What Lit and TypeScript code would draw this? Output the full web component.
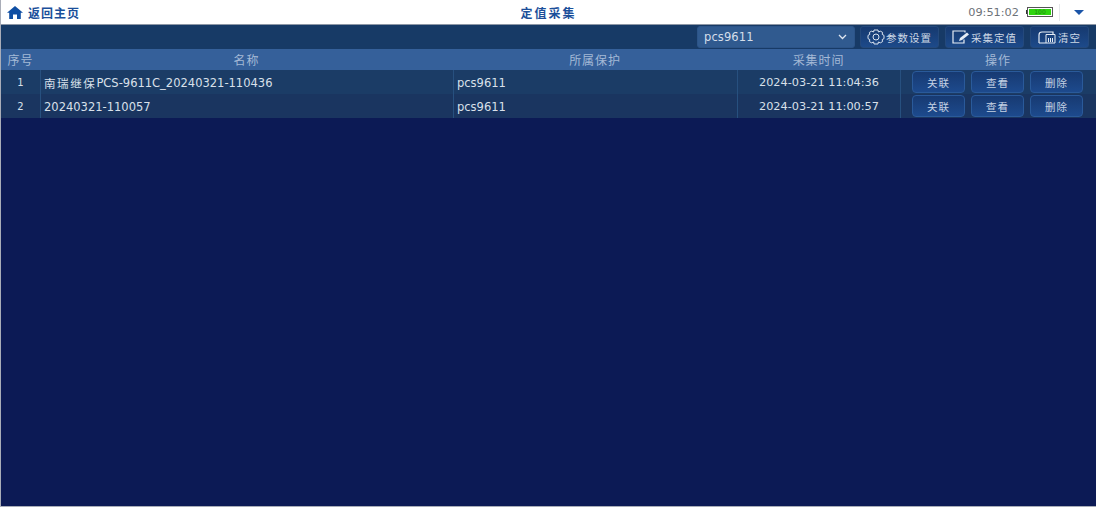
import { LitElement, html, css } from "lit";
import { customElement } from "lit/decorators.js";

const rows = [
  { n: 1, cjk: "南瑞继保", name: "PCS-9611C_20240321-110436", prot: "pcs9611", time: "2024-03-21 11:04:36" },
  { n: 2, cjk: "", name: "20240321-110057", prot: "pcs9611", time: "2024-03-21 11:00:57" },
];

@customElement("app-root")
export class AppRoot extends LitElement {
  static styles = css`
    :host {
      display: block;
      width: 1096px;
      height: 507px;
      box-sizing: border-box;
      overflow: hidden;
      font-family: "DejaVu Sans", "Noto Sans CJK SC", sans-serif;
    }
    .frame {
      height: 507px;
      box-sizing: border-box;
      border: 1px solid #a9adb8;
      border-top: 0;
      border-right: 0;
      background: #0c1a55;
      display: flex;
      flex-direction: column;
    }
    .top {
      height: 24px;
      flex: none;
      background: #fff;
      border-bottom: 1px solid #8d97a6;
      display: grid;
      grid-template-columns: 1fr auto 1fr;
      align-items: center;
    }
    .home {
      display: flex;
      align-items: center;
      gap: 5px;
      padding-left: 6px;
      color: #1b4f9a;
      font-size: 12px;
      font-weight: 700;
      letter-spacing: 1px;
    }
    .title {
      color: #1b4f9a;
      font-size: 12px;
      font-weight: 700;
      letter-spacing: 2px;
    }
    .status {
      display: flex;
      align-items: center;
      justify-content: flex-end;
      color: #6d7278;
      font-size: 11.3px;
    }
    .batt { margin-left: 7px; }
    .sep {
      width: 1px;
      height: 17px;
      margin: 0 14px 0 6px;
      background: #e6e8ea;
    }
    .tri {
      width: 0;
      height: 0;
      margin-right: 12px;
      border-left: 5px solid transparent;
      border-right: 5px solid transparent;
      border-top: 5px solid #1b55a8;
    }
    .tools {
      height: 24px;
      flex: none;
      background: #173a66;
      display: flex;
      align-items: center;
      justify-content: flex-end;
      gap: 6px;
      padding-right: 7px;
    }
    .select {
      width: 158px;
      height: 22px;
      box-sizing: border-box;
      margin-right: -1px;
      padding: 0 7px 0 6px;
      border: 1px solid #2c5488;
      border-radius: 3px;
      background: #305a8f;
      color: #d5deea;
      font-size: 11.5px;
      letter-spacing: 0.1px;
      display: flex;
      align-items: center;
      justify-content: space-between;
    }
    .tool {
      height: 22px;
      box-sizing: border-box;
      border: 1px solid #24497c;
      border-radius: 3px;
      background: linear-gradient(#16396f, #1d4a8a);
      color: #cdd8e6;
      font-size: 10.5px;
      display: flex;
      align-items: center;
      justify-content: center;
      gap: 1px;
      letter-spacing: 1px;
    }
    .t1 { width: 79px; }
    .t2 { width: 79px; }
    .t3 { width: 59px; }
    .grid {
      display: grid;
      grid-template-columns: 39px 413px 284px 163px 1fr;
    }
    .head {
      height: 21px;
      background: #35609a;
      color: #a4b9d6;
      font-size: 12px;
      align-items: center;
      text-align: center;
      letter-spacing: 0.9px;
    }
    .row {
      height: 24px;
      color: #d9e0ea;
      font-size: 11.5px;
      align-items: stretch;
    }
    .row.a { background: #1b3c66; }
    .row.b { background: #1a3560; }
    .cell {
      display: flex;
      align-items: center;
      padding: 1px 3px 0;
      border-left: 1px solid #27507f;
      white-space: nowrap;
    }
    .cell:first-child { border-left: 0; }
    .c { justify-content: center; padding: 1px 0 0; }
    .num { font-size: 10px; }
    .time { font-size: 11.3px; }
    .cjk { letter-spacing: 1.6px; }
    .ops { gap: 6px; padding: 0 0 0 11px; }
    .op {
      width: 53px;
      height: 22px;
      box-sizing: border-box;
      border: 1px solid #2a5a9a;
      border-radius: 4px;
      background: linear-gradient(#173a72, #1d4a8d);
      color: #c5d2e4;
      font-size: 10.5px;
      letter-spacing: 1px;
      display: flex;
      align-items: center;
      justify-content: center;
    }
  `;

  render() {
    return html`
      <div class="frame">
        <div class="top">
          <div class="home">
            <svg width="16" height="13" viewBox="0 0 16 13">
              <path d="M8 0 L16 6.8 H13.8 V13 H10 V8.5 H6 V13 H2.2 V6.8 H0 Z" fill="#0f4ea3" />
            </svg>
            <span>返回主页</span>
          </div>
          <div class="title">定值采集</div>
          <div class="status">
            <span>09:51:02</span>
            <svg class="batt" width="27" height="10" viewBox="0 0 27 10">
              <rect x="0" y="3" width="1.5" height="4" fill="#333" />
              <rect x="1.5" y="0.5" width="25" height="9" fill="#fff" stroke="#555" />
              <rect x="3" y="2" width="22" height="6" fill="#2fd40f" />
              <text x="14" y="7.2" font-size="6" text-anchor="middle" fill="#1d8a10">100</text>
            </svg>
            <div class="sep"></div>
            <div class="tri"></div>
          </div>
        </div>
        <div class="tools">
          <div class="select">
            <span>pcs9611</span>
            <svg width="9" height="6" viewBox="0 0 9 6"><path d="M1 1 L4.5 4.5 L8 1" fill="none" stroke="#dfe6f0" stroke-width="1.3" /></svg>
          </div>
          <div class="tool t1">
            <svg width="18" height="16" viewBox="0 0 18 16">
              <path d="M7 1 H11 L11.4 3 L13.4 2.2 L15.6 3.4 L15.2 5.4 L17 6.4 V9.6 L15.2 10.6 L15.6 12.6 L13.4 13.8 L11.4 13 L11 15 H7 L6.6 13 L4.6 13.8 L2.4 12.6 L2.8 10.6 L1 9.6 V6.4 L2.8 5.4 L2.4 3.4 L4.6 2.2 L6.6 3 Z" fill="none" stroke="#dbe4f0" stroke-width="1" stroke-linejoin="round" />
              <circle cx="9" cy="8" r="3" fill="none" stroke="#dbe4f0" stroke-width="1" />
            </svg>
            <span>参数设置</span>
          </div>
          <div class="tool t2">
            <svg width="18" height="14" viewBox="0 0 18 14">
              <path d="M13 2.5 V1 H1 V13 H12 V9.5" fill="none" stroke="#e6edf5" stroke-width="1.2" />
              <path d="M7 11 L8 8 L15 2.5 L17 4.5 L10 10 Z" fill="#e6edf5" />
            </svg>
            <span>采集定值</span>
          </div>
          <div class="tool t3">
            <svg width="19" height="14" viewBox="0 0 19 14">
              <path d="M1 13 V5 Q1 2 4 2 H15 V4.5 M1 13 H8" fill="none" stroke="#e6edf5" stroke-width="1.2" />
              <path d="M8 4.5 H17 V13 H8 Z" fill="none" stroke="#e6edf5" stroke-width="1" />
              <path d="M10.5 8 V12 M12.5 8 V12 M14.5 8 V12" stroke="#e6edf5" stroke-width="1" />
            </svg>
            <span>清空</span>
          </div>
        </div>
        <div class="grid head">
          <span>序号</span><span>名称</span><span>所属保护</span><span>采集时间</span><span>操作</span>
        </div>
        ${rows.map(
          (r, i) => html`
            <div class="grid row ${i % 2 ? "b" : "a"}">
              <div class="cell c num">${r.n}</div>
              <div class="cell"><span class="cjk">${r.cjk}</span>${r.name}</div>
              <div class="cell">${r.prot}</div>
              <div class="cell c time">${r.time}</div>
              <div class="cell ops">
                <div class="op">关联</div>
                <div class="op">查看</div>
                <div class="op">删除</div>
              </div>
            </div>
          `
        )}
      </div>
    `;
  }
}
